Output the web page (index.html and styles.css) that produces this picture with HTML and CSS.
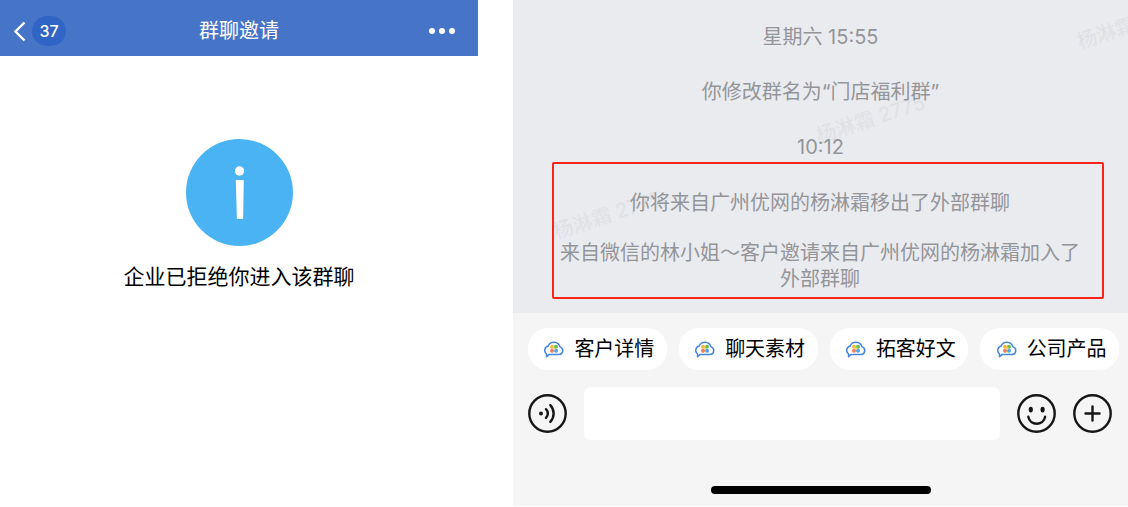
FILE: index.html
```html
<!DOCTYPE html>
<html lang="zh-CN">
<head>
    <meta charset="UTF-8">
    <meta name="viewport" content="width=device-width, initial-scale=1.0">
    <title>群聊邀请</title>
    <link rel="stylesheet" href="styles.css">
</head>
<body>
    <svg width="0" height="0" class="sprite" aria-hidden="true">
        <symbol id="cloud" viewBox="0 0 20 18">
            <path d="M4.8 14.6H15.2a4.1 4.1 0 0 0 .6-8A6.2 6.2 0 0 0 4.2 6a4.5 4.5 0 0 0-1.6 8l-.1 2.8 2.5-2.2" fill="none" stroke="#4586e0" stroke-width="1.5" stroke-linejoin="round" stroke-linecap="round"/>
            <circle cx="8" cy="6.8" r="2" fill="#f5b83d"/>
            <circle cx="12" cy="6.8" r="2" fill="#6cc04a"/>
            <circle cx="8" cy="10.8" r="2" fill="#ee7d5b"/>
            <circle cx="12" cy="10.8" r="2" fill="#4fa3e8"/>
            <path d="M9 7.8l2 2M11 7.8l-2 2" stroke="#f5d76a" stroke-width="1"/>
        </symbol>
    </svg>

    <div class="container">
        <section class="invite">
            <header class="navbar">
                <button class="back" aria-label="返回">
                    <svg width="13" height="21" viewBox="0 0 13 21"><path d="M11.5 1.5L2.5 10.5l9 9" fill="none" stroke="#fff" stroke-width="2.4"/></svg>
                    <span class="badge">37</span>
                </button>
                <h1>群聊邀请</h1>
                <button class="more" aria-label="更多">
                    <svg width="28" height="8" viewBox="0 0 28 8" fill="#fff"><circle cx="4" cy="4" r="3"/><circle cx="14" cy="4" r="3"/><circle cx="24" cy="4" r="3"/></svg>
                </button>
            </header>
            <div class="notice">
                <svg width="107" height="107" viewBox="0 0 107 107">
                    <circle cx="53.5" cy="53.5" r="53.5" fill="#4ab3f3"/>
                    <circle cx="53.5" cy="32" r="4.7" fill="#fff"/>
                    <path d="M49.8 41h8l-.7 39h-6.2z" fill="#fff"/>
                </svg>
                <p>企业已拒绝你进入该群聊</p>
            </div>
        </section>

        <section class="chat">
            <div class="messages">
                <span class="watermark mark1">杨淋霜</span>
                <span class="watermark mark2">杨淋霜 2775</span>
                <span class="watermark mark3">杨淋霜 2775</span>
                <p>星期六 15:55</p>
                <p>你修改群名为“门店福利群”</p>
                <p>10:12</p>
                <div class="highlight">
                    <p>你将来自广州优网的杨淋霜移出了外部群聊</p>
                    <p>来自微信的林小姐～客户邀请来自广州优网的杨淋霜加入了外部群聊</p>
                </div>
            </div>

            <footer class="toolbar">
                <div class="chips">
                    <button class="chip"><svg width="20" height="18"><use href="#cloud"/></svg>客户详情</button>
                    <button class="chip"><svg width="20" height="18"><use href="#cloud"/></svg>聊天素材</button>
                    <button class="chip"><svg width="20" height="18"><use href="#cloud"/></svg>拓客好文</button>
                    <button class="chip"><svg width="20" height="18"><use href="#cloud"/></svg>公司产品</button>
                </div>
                <div class="compose">
                    <button class="round" aria-label="语音">
                        <svg width="39" height="39" viewBox="0 0 39 39" fill="none" stroke="#161616" stroke-width="2.4" stroke-linecap="round">
                            <circle cx="19.5" cy="19.5" r="18.2"/>
                            <circle cx="13" cy="19.5" r="2" fill="#161616" stroke="none"/>
                            <path d="M18 15.2a6 6 0 0 1 0 8.6M22.3 11.2a12 12 0 0 1 0 16.6"/>
                        </svg>
                    </button>
                    <input type="text" aria-label="消息">
                    <button class="round" aria-label="表情">
                        <svg width="39" height="39" viewBox="0 0 39 39" fill="none" stroke="#161616" stroke-width="2.4" stroke-linecap="round">
                            <circle cx="19.5" cy="19.5" r="18.2"/>
                            <ellipse cx="13.8" cy="15.6" rx="2.1" ry="2.9" fill="#161616" stroke="none"/>
                            <ellipse cx="25.6" cy="15.6" rx="2.1" ry="2.9" fill="#161616" stroke="none"/>
                            <path d="M11.3 22.8c1.6 9.2 15.2 9.2 16.8 0"/>
                        </svg>
                    </button>
                    <button class="round" aria-label="添加">
                        <svg width="39" height="39" viewBox="0 0 39 39" fill="none" stroke="#161616" stroke-width="2.4" stroke-linecap="round">
                            <circle cx="19.5" cy="19.5" r="18.2"/>
                            <path d="M19.5 12.5v14M12.5 19.5h14"/>
                        </svg>
                    </button>
                </div>
            </footer>
            <div class="home-bar"></div>
        </section>
    </div>
</body>
</html>
```

FILE: styles.css
```css
body {
    margin: 0;
    background-color: #fff;
    color: #000;
    font-family: Inter, "Noto Sans CJK SC", sans-serif;
    font-size: 20px;
}
h1, p {
    margin: 0;
    font-weight: normal;
}
button {
    padding: 0;
    border: none;
    background: none;
    color: inherit;
    font: inherit;
    cursor: pointer;
}
svg {
    display: block;
    flex-shrink: 0;
}
.sprite {
    position: absolute;
}
.container {
    display: grid;
    grid-template-columns: 478fr 615fr;
    column-gap: 35px;
    align-items: start;
}

/* Invitación */
.navbar {
    display: grid;
    grid-template-columns: 1fr auto 1fr;
    align-items: center;
    padding: 15px 13px 9px;
    background-color: #4675c8;
    color: #fff;
}
.navbar h1 {
    font-size: 20px;
    line-height: 32px;
}
.back {
    display: flex;
    align-items: center;
    justify-self: start;
    gap: 6px;
}
.badge {
    width: 34px;
    border-radius: 15px;
    background-color: #3065c6;
    font-size: 16px;
    font-weight: 500;
    line-height: 30px;
}
.more {
    justify-self: end;
    padding-right: 9px;
}
.notice {
    display: flex;
    flex-direction: column;
    align-items: center;
    gap: 16px;
    padding-top: 83px;
}
.notice p {
    font-size: 21px;
    line-height: 30px;
}

/* Chat */
.chat {
    padding-bottom: 12px;
    background-color: #f5f5f5;
}
.messages {
    position: relative;
    overflow: hidden;
    padding: 24px 24px 14px 39px;
    background-color: #eaebef;
    color: #949599;
    line-height: 26px;
    text-align: center;
}
.messages > p {
    position: relative;
    margin: 0 15px 29px 0;
}
.messages > p:nth-last-of-type(1) {
    margin-bottom: 2px;
}
.highlight {
    position: relative;
    padding: 26px 20px 5px 4px;
    border: 2px solid #fa2318;
    border-radius: 2px;
}
.highlight p + p {
    margin-top: 24px;
}
.watermark {
    position: absolute;
    color: #dfe0e4;
    white-space: nowrap;
    transform: rotate(-18deg);
}
.mark1 {
    top: 20px;
    left: 563px;
}
.mark2 {
    top: 106px;
    left: 301px;
}
.mark3 {
    top: 202px;
    left: 38px;
}

.toolbar {
    padding: 15px 9px 46px 15px;
}
.chips {
    display: grid;
    grid-template-columns: repeat(4, 1fr);
    gap: 12px;
}
.chip {
    display: flex;
    align-items: center;
    justify-content: center;
    gap: 10px;
    padding-left: 4px;
    border-radius: 20px;
    background-color: #fff;
    line-height: 42px;
}
.compose {
    display: flex;
    align-items: center;
    gap: 17px;
    margin: 17px 7px 0 0;
}
.compose input {
    flex: 1;
    min-width: 0;
    height: 53px;
    box-sizing: border-box;
    padding: 0 12px;
    border: none;
    border-radius: 7px;
    background-color: #fff;
    font: inherit;
}
.home-bar {
    width: 220px;
    height: 8px;
    margin: 0 auto;
    border-radius: 4px;
    background-color: #000;
}
```
